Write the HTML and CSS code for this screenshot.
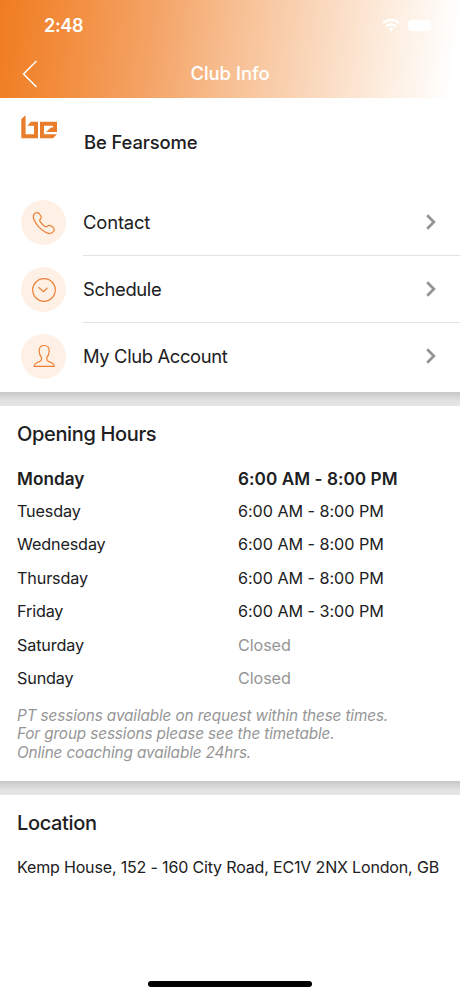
FILE: index.html
```html
<!DOCTYPE html>
<html lang="en">
<head>
	<meta charset="utf-8">
	<title>Club Info</title>
	<link rel="stylesheet" href="styles.css">
</head>
<body>
	<div class="phone">
		<div class="header">
			<div class="status">
				<span class="time">2:48</span>
				<div class="signals">
					<svg class="dots" width="22" height="4" viewBox="0 0 22 4" fill="#fff"><circle cx="2" cy="2" r="1.5"/><circle cx="8" cy="2" r="1.5"/><circle cx="14" cy="2" r="1.5"/><circle cx="20" cy="2" r="1.5"/></svg>
					<svg width="18" height="14" viewBox="0 0 18 14" fill="none" stroke="#fff" stroke-width="2.2"><path d="M1 5.2a11.4 11.4 0 0 1 16 0M4 8.4a7.1 7.1 0 0 1 10 0"/><path d="M9 13.5L6.3 10.8a3.8 3.8 0 0 1 5.4 0z" fill="#fff" stroke="none"/></svg>
					<div class="battery"></div>
				</div>
			</div>
			<div class="navbar">
				<svg class="back" width="16" height="28" viewBox="0 0 16 28" fill="none" stroke="#fff" stroke-width="1.5"><path d="M14.5 1L1.5 14l13 13"/></svg>
				<h1 class="title">Club Info</h1>
			</div>
		</div>

		<div class="club">
			<svg class="logo" width="37" height="26" viewBox="0 0 37 26" fill="#e87e2b"><path d="M.3 4L4.6.3v19H13v-8.6H6.3l3.7-4h7v16.600H.3z"/><path d="M19 6.7h17V17H25l5-4.5h2v-1.800h-9v8.600h13l-4 4H19z"/></svg>
			<span>Be Fearsome</span>
		</div>

		<div class="menu">
			<div class="item">
				<div class="icon">
					<svg width="24" height="24" viewBox="0 0 24 24"><path d="M2.3 2.800C3.600 1.300 5.800 1.200 7 2.500l1.600 2c.9 1.200.7 2.600-.3 3.700-.8.800-.8 1.500-.2 2.500 1.300 1.900 2.900 3.400 4.800 4.700 1 .6 1.700.5 2.500-.2 1.100-1 2.600-1.200 3.800-.3l2 1.500c1.400 1.200 1.300 3.200 0 4.500-1.900 1.900-4.700 2.100-7.700.4-2.500-1.400-4.900-3.300-6.900-5.600C4.500 13.400 3.100 11.300 2.100 9 1 6.600 1 4.400 2.300 2.800z"/></svg>
				</div>
				<div class="label">
					<span>Contact</span>
					<svg class="arrow" width="10" height="16" viewBox="0 0 10 16"><path d="M1.2 1.2L7.9 8l-6.7 6.8"/></svg>
				</div>
			</div>
			<div class="item">
				<div class="icon">
					<svg width="24" height="24" viewBox="0 0 24 24"><circle cx="12" cy="12" r="11.3"/><path d="M6.500 9.300l5 4.400 4-3.900"/></svg>
				</div>
				<div class="label">
					<span class="tight">Schedule</span>
					<svg class="arrow" width="10" height="16" viewBox="0 0 10 16"><path d="M1.2 1.2L7.9 8l-6.7 6.8"/></svg>
				</div>
			</div>
			<div class="item">
				<div class="icon">
					<svg width="24" height="24" viewBox="0 0 24 24"><path d="M12.200 1.500c-3.100 0-5 2.100-5 5.200 0 2.600.7 4.900 2.300 6.700v1.800c0 1.100-.5 1.700-1.600 2.200l-3.200 1.300c-1.600.7-2.400 1.700-2.500 3.700h20c-.1-2-.9-3-2.500-3.700l-3.200-1.300c-1.100-.5-1.600-1.100-1.600-2.200v-1.800c1.600-1.800 2.300-4.100 2.300-6.700 0-3.100-1.900-5.200-5-5.200z"/></svg>
				</div>
				<div class="label">
					<span class="tight">My Club Account</span>
					<svg class="arrow" width="10" height="16" viewBox="0 0 10 16"><path d="M1.2 1.2L7.9 8l-6.7 6.8"/></svg>
				</div>
			</div>
		</div>

		<div class="divider"></div>

		<div class="hours">
			<h2>Opening Hours</h2>
			<div class="day today"><span>Monday</span><span>6:00 AM - 8:00 PM</span></div>
			<div class="day"><span class="name">Tuesday</span><span>6:00 AM - 8:00 PM</span></div>
			<div class="day"><span class="name">Wednesday</span><span>6:00 AM - 8:00 PM</span></div>
			<div class="day"><span class="name">Thursday</span><span>6:00 AM - 8:00 PM</span></div>
			<div class="day"><span class="name">Friday</span><span>6:00 AM - 3:00 PM</span></div>
			<div class="day"><span class="name">Saturday</span><span class="closed">Closed</span></div>
			<div class="day"><span class="name">Sunday</span><span class="closed">Closed</span></div>
			<p class="note">PT sessions available on request within these times.<br>For group sessions please see the timetable.<br>Online coaching available 24hrs.</p>
		</div>

		<div class="divider"></div>

		<div class="location">
			<h2>Location</h2>
			<p class="address">Kemp House, 152 - 160 City Road, EC1V 2NX London, GB</p>
		</div>

		<div class="home"></div>
	</div>
</body>
</html>
```
FILE: styles.css
```css
*{
	box-sizing: border-box;
}

body{
	margin: 0;
	background: #fff;
	color: #202022;
	font-family: Inter, "Liberation Sans", sans-serif;
}

h1, h2, p{
	margin: 0;
	font-weight: 500;
}

svg{
	display: block;
	flex: none;
}

.phone{
	width: 460px;
	height: 996px;
	display: flex;
	flex-direction: column;
	overflow: hidden;
}

/* header */
.header{
	height: 98px;
	flex: none;
	background: linear-gradient(97deg, #f07c20 0%, #f28c3c 14%, #f4a365 33%, #f7be91 50%, #fad8bc 68%, #fdeee0 84%, #fff 98%);
	color: #fff;
}

.status{
	height: 50px;
	padding: 0 29px 0 44px;
	display: flex;
	align-items: center;
	justify-content: space-between;
}

.time{
	font-size: 18px;
	font-weight: 600;
	letter-spacing: -0.3px;
	padding-top: 1px;
}

.signals{
	display: flex;
	align-items: center;
	gap: 8px;
}

.dots{
	opacity: 0.3;
	margin: 8px -5px 0 0;
}

.battery{
	width: 23px;
	height: 11px;
	border-radius: 4px;
	background: #fff;
}

.navbar{
	height: 47px;
	padding-left: 22px;
	display: flex;
	align-items: center;
}

.title{
	flex: 1;
	padding-right: 38px;
	text-align: center;
	font-size: 18.4px;
	line-height: 47px;
}

/* club name */
.club{
	height: 91px;
	flex: none;
	padding: 17px 21px 0;
	display: flex;
	gap: 26px;
	font-size: 18.4px;
	font-weight: 450;
	letter-spacing: -0.1px;
	line-height: 55px;
}

/* menu */
.menu{
	height: 203px;
	flex: none;
}

.item{
	height: 67px;
	padding-left: 21px;
	display: flex;
	align-items: center;
	gap: 17px;
}

.icon{
	width: 45px;
	height: 45px;
	flex: none;
	border-radius: 50%;
	background: #fff0e5;
	display: flex;
	align-items: center;
	justify-content: center;
}

.icon svg{
	fill: none;
	stroke: #ea8136;
	stroke-width: 1.2;
}

.label{
	flex: 1;
	height: 100%;
	padding: 0 24px 0 0;
	border-bottom: 1px solid #e2e2e2;
	display: flex;
	align-items: center;
	justify-content: space-between;
	font-size: 18.4px;
	letter-spacing: -0.15px;
}

.tight{
	letter-spacing: -0.37px;
}

.item:last-child{
	height: 66px;
}

.item:last-child .label{
	border-bottom: none;
}

.arrow{
	fill: none;
	stroke: #949494;
	stroke-width: 2.7;
}

.divider{
	height: 14px;
	flex: none;
	background: linear-gradient(#c8c8c8, #d6d6d6 35%, #e2e2e2 65%, #e5e5e5);
}

/* opening hours */
.hours{
	height: 375px;
	flex: none;
	padding: 13px 17px 0;
}

h2{
	font-size: 20px;
	font-weight: 450;
	letter-spacing: -0.35px;
	line-height: 30px;
}

.hours h2{
	margin-bottom: 12.6px;
}

.day{
	display: grid;
	grid-template-columns: 221px 1fr;
	font-size: 16.2px;
	letter-spacing: -0.05px;
	line-height: 33.4px;
}

.name{
	letter-spacing: -0.15px;
}

.today{
	font-size: 17.2px;
	font-weight: 600;
	letter-spacing: 0.04px;
}

.closed{
	letter-spacing: -0.1px;
	color: #969696;
}

.note{
	margin-top: 11.6px;
	color: #969696;
	font-size: 15.3px;
	font-weight: 400;
	font-style: italic;
	letter-spacing: -0.12px;
	line-height: 18.4px;
}

/* location */
.location{
	flex: 1;
	padding: 13px 17px 0;
}

.address{
	margin-top: 18px;
	font-size: 16px;
	font-weight: 400;
	letter-spacing: -0.16px;
	line-height: 22px;
	white-space: nowrap;
}

.home{
	width: 164px;
	height: 6px;
	flex: none;
	margin: 0 auto 9px;
	border-radius: 3px;
	background: #000;
}
```
